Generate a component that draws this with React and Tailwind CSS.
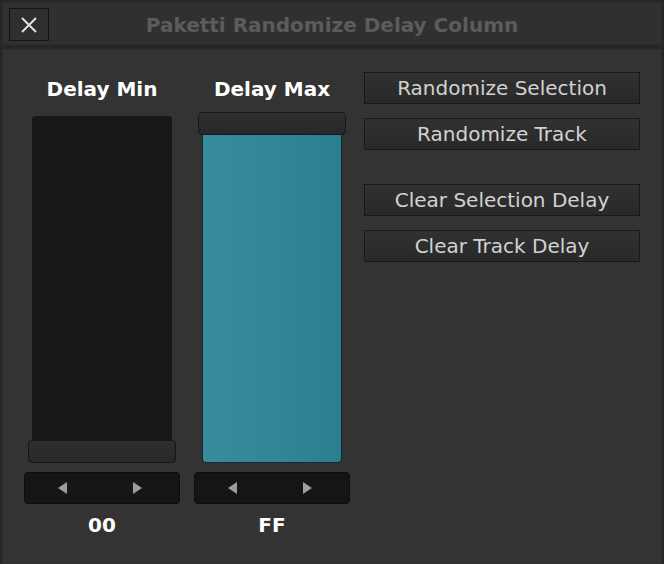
import React from 'react';

const font = { fontFamily: '"DejaVu Sans", "Liberation Sans", sans-serif' };

function Arrows() {
  return (
    <div className="flex h-[32px] rounded-[4px] border border-[#0c0c0c] bg-[#151515]">
      <div className="flex flex-1 items-center justify-center">
        <svg width="9" height="12" viewBox="0 0 9 12">
          <polygon points="9,0 9,12 0,6" fill="#9c9c9c" />
        </svg>
      </div>
      <div className="flex flex-1 items-center justify-center pr-[4px]">
        <svg width="9" height="12" viewBox="0 0 9 12">
          <polygon points="0,0 0,12 9,6" fill="#9c9c9c" />
        </svg>
      </div>
    </div>
  );
}

function Handle() {
  return (
    <div className="mx-[4px] h-[23px] rounded-[4px] border border-[#161616] bg-gradient-to-b from-[#2f2f2f] to-[#282828]" />
  );
}

function Column({ label, value, full }) {
  return (
    <div className="flex w-[156px] flex-col">
      <div className="flex h-[40px] items-center justify-center pb-[6px] text-[20px] font-bold text-white">
        {label}
      </div>
      <div className="flex h-[351px] flex-col">
        {full ? (
          <>
            <Handle />
            <div className="mx-[8px] flex flex-1 overflow-hidden rounded-b-[4px] border border-t-0 border-[#122a30] bg-gradient-to-r from-[#388c9c] via-[#328697] to-[#2b7e8d]" />
          </>
        ) : (
          <>
            <div className="mx-[8px] mt-[4px] flex-1 rounded-t-[4px] bg-[#181818]" />
            <Handle />
          </>
        )}
      </div>
      <div className="mt-[9px]">
        <Arrows />
      </div>
      <div className="flex h-[42px] items-center justify-center text-[20px] font-bold text-white">
        {value}
      </div>
    </div>
  );
}

function Btn({ children, className = '' }) {
  return (
    <button
      className={`flex h-[32px] w-[276px] items-center justify-center border border-[#181818] bg-gradient-to-b from-[#313131] to-[#292929] text-[20px] text-[#d2d2d2] ${className}`}
      style={font}
    >
      {children}
    </button>
  );
}

export default function App() {
  return (
    <div className="flex h-[564px] w-[664px] flex-col bg-[#262626]" style={font}>
      <div className="relative mx-[2px] mt-[2px] flex h-[43px] items-center justify-center border border-[#2c2c2c] bg-[#303030] pt-[2px]">
        <button className="absolute left-[6px] top-[5px] flex h-[33px] w-[40px] items-center justify-center border border-[#141414] bg-[#2f2f2f]">
          <svg width="20" height="20" viewBox="0 0 20 20">
            <path d="M3 3 L17 17 M17 3 L3 17" stroke="#e0e0e0" strokeWidth="2" />
          </svg>
        </button>
        <span className="text-[20px] font-bold text-[#5c5c5c]">Paketti Randomize Delay Column</span>
      </div>
      <div className="mx-[2px] mt-[4px] flex flex-1 gap-[14px] border border-[#2f2f2f] bg-[#333333] pl-[21px] pt-[22px]">
        <Column label="Delay Min" value="00" />
        <Column label="Delay Max" value="FF" full />
        <div className="flex flex-col">
          <Btn>Randomize Selection</Btn>
          <Btn className="mt-[14px]">Randomize Track</Btn>
          <Btn className="mt-[34px]">Clear Selection Delay</Btn>
          <Btn className="mt-[14px]">Clear Track Delay</Btn>
        </div>
      </div>
    </div>
  );
}
